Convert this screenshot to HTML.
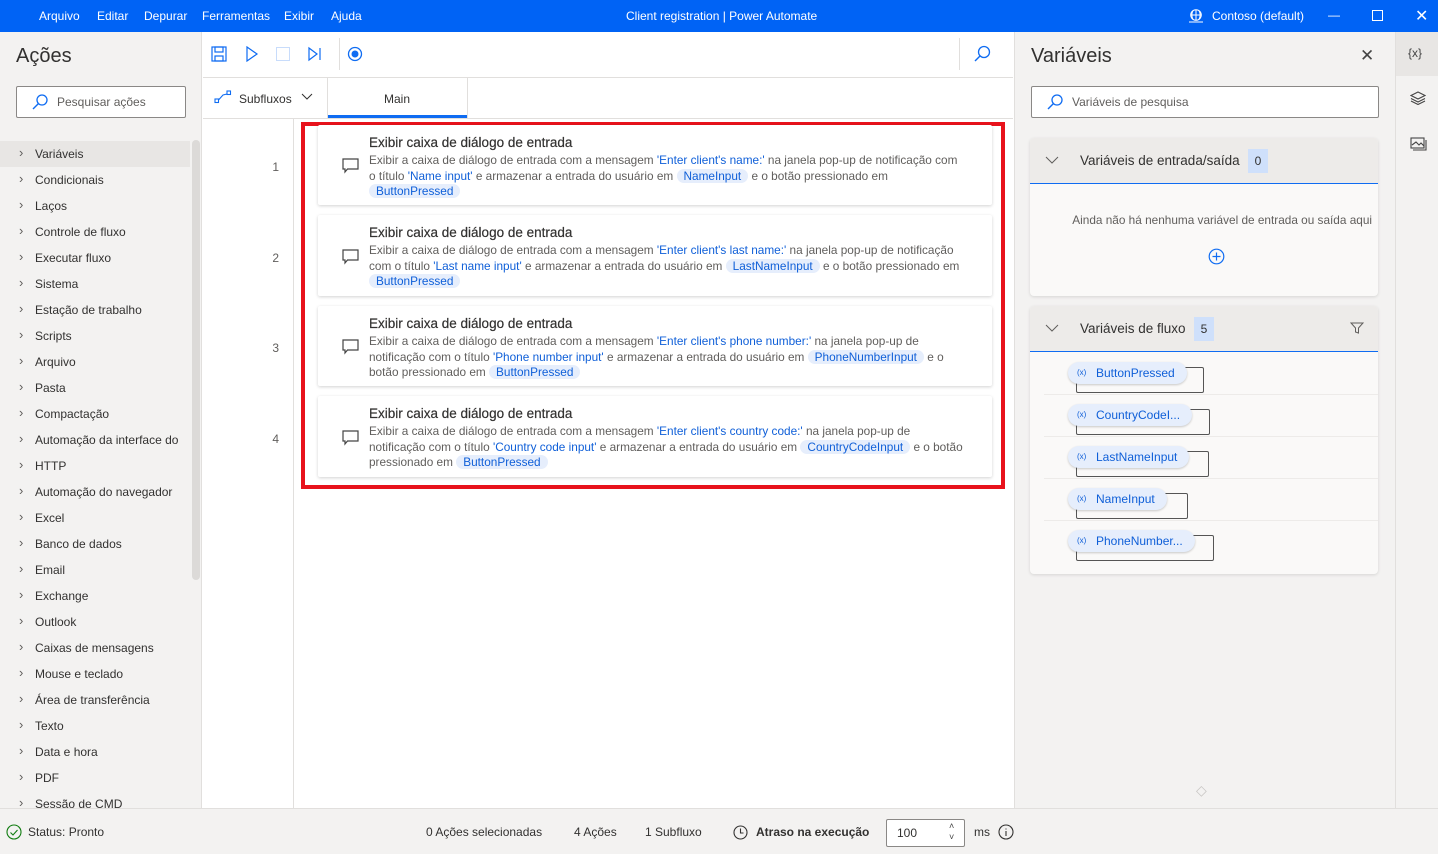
<!DOCTYPE html>
<html><head><meta charset="utf-8"><style>
*{box-sizing:border-box;margin:0;padding:0}
body{width:1438px;height:854px;overflow:hidden;font-family:"Liberation Sans",sans-serif;background:#fff;position:relative;color:#323130;font-size:12px}
.abs{position:absolute}
.tb{left:0;top:0;width:1438px;height:32px;background:#0063f5;color:#fff;font-size:12px}
.tb span{position:absolute;top:9px}
.left{left:0;top:32px;width:202px;height:776px;background:#f3f2f1;border-right:1px solid #e1dfdd}
.left .it{position:absolute;left:0;width:190px;height:26px;line-height:26px;padding-left:35px;font-size:12px;color:#323130}
.left .it:before{content:"›";position:absolute;left:19px;top:-1px;color:#605e5c;font-size:13px}
.search{border:1px solid #8a8886;background:#fff;height:32px;border-radius:2px;color:#605e5c;font-size:12px;line-height:30px;padding-left:40px}
.card{left:318px;width:674px;background:#fff;box-shadow:0 1px 3px rgba(0,0,0,.18);border-radius:2px}
.card h4{position:absolute;left:51px;top:10px;font-size:13.5px;font-weight:normal;color:#323130;-webkit-text-stroke:.2px #323130}
.card p{position:absolute;left:51px;top:28px;width:598px;font-size:11.8px;line-height:15.7px;color:#605e5c}
.b{color:#0f5fd8}
.pill{background:#e6eefc;color:#0f5fd8;border-radius:9px;padding:0 7px}
.num{left:203px;width:76px;text-align:right;color:#605e5c;font-size:12px}
.ic{left:342px}
.right{left:1014px;top:32px;width:381px;height:776px;background:#f3f2f1;border-left:1px solid #e1dfdd}
.strip{left:1395px;top:32px;width:43px;height:776px;background:#f3f2f1;border-left:1px solid #e1dfdd}
.sec{background:#faf9f8;border-radius:4px;box-shadow:0 1px 3px rgba(0,0,0,.12)}
.sech{height:46px;background:#edebe9;border-bottom:1.5px solid #0f6cf2;border-radius:4px 4px 0 0;position:relative}
.badge{display:inline-block;background:#cfe0fb;padding:0 7px;height:24px;line-height:24px;margin-left:8px;font-size:12px}
.var{position:absolute;left:1044px;width:334px;height:42px;border-bottom:1px solid #edebe9}
.var .bx{position:absolute;left:32px;top:14px;height:26px;border:1px solid #555;border-radius:2px}
.var .vp{position:absolute;left:24px;top:9px;height:22px;line-height:22px;background:#e6eefc;border-radius:11px;padding:0 12px 0 28px;color:#0f5fd8;font-size:12px;box-shadow:0 1px 2px rgba(0,0,0,.2)}
.var .vp:before{content:"(x)";position:absolute;left:9px;font-size:8px;top:0}
.status{left:0;top:808px;width:1438px;height:46px;background:#f3f2f1;border-top:1px solid #e1dfdd;font-size:12px}
.status span{position:absolute;top:16px}
</style></head><body>
<div class="abs tb">
<span style="left:39px">Arquivo</span><span style="left:97px">Editar</span><span style="left:144px">Depurar</span><span style="left:202px">Ferramentas</span><span style="left:284px">Exibir</span><span style="left:331px">Ajuda</span>
<span style="left:626px">Client registration | Power Automate</span>
<svg class="abs" style="left:1188px;top:9px" width="16" height="14" fill="none" stroke="#fff" stroke-width="1"><circle cx="8" cy="6" r="5.3"/><path d="M2.7 6h10.6M8 0.7v10.6M5 1.5c-1.5 3-1.5 6 0 9M11 1.5c1.5 3 1.5 6 0 9M1 13h14"/></svg>
<span style="left:1212px">Contoso (default)</span>
<span style="left:1328px;top:8px">—</span>
<span style="left:1372px;top:10px;width:11px;height:11px;border:1.3px solid #fff"></span>
<span style="left:1415px;top:6px;font-size:16px">✕</span>
</div>

<div class="abs left">
<div class="abs" style="left:16px;top:13px;font-size:20px;color:#323130">Ações</div>
<div class="abs search" style="left:16px;top:54px;width:170px">Pesquisar ações</div>
<svg class="abs" style="left:32px;top:62px" width="16" height="16"><circle cx="10" cy="6" r="5" fill="none" stroke="#0f6cf2" stroke-width="1.3"/><line x1="6.5" y1="9.5" x2="1" y2="15" stroke="#0f6cf2" stroke-width="1.4"/></svg>
<div class="abs" style="left:192px;top:108px;width:8px;height:440px;background:#dcdad8;border-radius:4px"></div>
<div class="it" style="top:109px;background:#e8e6e4">Variáveis</div>
<div class="it" style="top:135px">Condicionais</div>
<div class="it" style="top:161px">Laços</div>
<div class="it" style="top:187px">Controle de fluxo</div>
<div class="it" style="top:213px">Executar fluxo</div>
<div class="it" style="top:239px">Sistema</div>
<div class="it" style="top:265px">Estação de trabalho</div>
<div class="it" style="top:291px">Scripts</div>
<div class="it" style="top:317px">Arquivo</div>
<div class="it" style="top:343px">Pasta</div>
<div class="it" style="top:369px">Compactação</div>
<div class="it" style="top:395px">Automação da interface do</div>
<div class="it" style="top:421px">HTTP</div>
<div class="it" style="top:447px">Automação do navegador</div>
<div class="it" style="top:473px">Excel</div>
<div class="it" style="top:499px">Banco de dados</div>
<div class="it" style="top:525px">Email</div>
<div class="it" style="top:551px">Exchange</div>
<div class="it" style="top:577px">Outlook</div>
<div class="it" style="top:603px">Caixas de mensagens</div>
<div class="it" style="top:629px">Mouse e teclado</div>
<div class="it" style="top:655px">Área de transferência</div>
<div class="it" style="top:681px">Texto</div>
<div class="it" style="top:707px">Data e hora</div>
<div class="it" style="top:733px">PDF</div>
<div class="it" style="top:759px;height:17px;overflow:hidden">Sessão de CMD</div>
</div>

<div class="abs" style="left:203px;top:32px;width:810px;height:46px;border-bottom:1px solid #e1dfdd"></div>
<svg class="abs" style="left:211px;top:46px" width="16" height="16" fill="none" stroke="#0f6cf2" stroke-width="1.2"><rect x="1" y="1" width="14" height="14"/><rect x="4" y="1" width="8" height="5"/><rect x="4" y="10" width="8" height="5"/></svg>
<svg class="abs" style="left:245px;top:46px" width="14" height="16" fill="none" stroke="#0f6cf2" stroke-width="1.2"><path d="M2 1 L12 8 L2 15 Z"/></svg>
<div class="abs" style="left:276px;top:47px;width:14px;height:14px;border:1px solid #c8dcfb"></div>
<svg class="abs" style="left:308px;top:46px" width="14" height="16" fill="none" stroke="#0f6cf2" stroke-width="1.2"><path d="M1 2 L9 8 L1 14 Z"/><line x1="12" y1="2" x2="12" y2="14"/></svg>
<div class="abs" style="left:339px;top:38px;width:1px;height:32px;background:#e1dfdd"></div>
<svg class="abs" style="left:347px;top:46px" width="16" height="16"><circle cx="8" cy="8" r="6.5" fill="none" stroke="#0f6cf2" stroke-width="1.3"/><circle cx="8" cy="8" r="3.5" fill="#0f6cf2"/></svg>
<div class="abs" style="left:959px;top:38px;width:1px;height:32px;background:#e1dfdd"></div>
<svg class="abs" style="left:973px;top:45px" width="18" height="18"><circle cx="11" cy="7" r="5.5" fill="none" stroke="#0f6cf2" stroke-width="1.3"/><line x1="7" y1="11" x2="2" y2="16" stroke="#0f6cf2" stroke-width="1.4"/></svg>
<div class="abs" style="left:203px;top:78px;width:810px;height:41px;border-bottom:1px solid #e1dfdd"></div>
<svg class="abs" style="left:214px;top:90px" width="18" height="14" fill="none" stroke="#0f6cf2" stroke-width="1.1"><rect x="1" y="9" width="3.5" height="3.5"/><rect x="13" y="1" width="3.5" height="3.5"/><path d="M4.5 10 L9 5 L13 4"/></svg>
<div class="abs" style="left:239px;top:92px;font-size:12px">Subfluxos</div>
<svg class="abs" style="left:301px;top:93px" width="12" height="8" fill="none" stroke="#323130"><path d="M1 1 L6 6 L11 1"/></svg>
<div class="abs" style="left:327px;top:78px;width:1px;height:41px;background:#e1dfdd"></div>
<div class="abs" style="left:467px;top:78px;width:1px;height:41px;background:#e1dfdd"></div>
<div class="abs" style="left:384px;top:92px;font-size:12px">Main</div>
<div class="abs" style="left:328px;top:115px;width:139px;height:3px;background:#0f6cf2"></div>
<div class="abs" style="left:293px;top:119px;width:1px;height:689px;background:#e1dfdd"></div>

<div class="abs num" style="top:160px">1</div>
<div class="abs num" style="top:251px">2</div>
<div class="abs num" style="top:341px">3</div>
<div class="abs num" style="top:432px">4</div>

<div class="abs" style="left:301px;top:122px;width:704px;height:367px;border:4px solid #e8121c"></div>

<div class="abs card" style="top:125px;height:80px"><h4>Exibir caixa de diálogo de entrada</h4><p>Exibir a caixa de diálogo de entrada com a mensagem <span class="b">'Enter client's name:'</span> na janela pop-up de notificação com o título <span class="b">'Name input'</span> e armazenar a entrada do usuário em <span class="pill">NameInput</span> e o botão pressionado em <span class="pill">ButtonPressed</span></p></div>
<div class="abs card" style="top:215px;height:81px"><h4>Exibir caixa de diálogo de entrada</h4><p>Exibir a caixa de diálogo de entrada com a mensagem <span class="b">'Enter client's last name:'</span> na janela pop-up de notificação com o título <span class="b">'Last name input'</span> e armazenar a entrada do usuário em <span class="pill">LastNameInput</span> e o botão pressionado em <span class="pill">ButtonPressed</span></p></div>
<div class="abs card" style="top:306px;height:80px"><h4>Exibir caixa de diálogo de entrada</h4><p>Exibir a caixa de diálogo de entrada com a mensagem <span class="b">'Enter client's phone number:'</span> na janela pop-up de notificação com o título <span class="b">'Phone number input'</span> e armazenar a entrada do usuário em <span class="pill">PhoneNumberInput</span> e o botão pressionado em <span class="pill">ButtonPressed</span></p></div>
<div class="abs card" style="top:396px;height:81px"><h4>Exibir caixa de diálogo de entrada</h4><p>Exibir a caixa de diálogo de entrada com a mensagem <span class="b">'Enter client's country code:'</span> na janela pop-up de notificação com o título <span class="b">'Country code input'</span> e armazenar a entrada do usuário em <span class="pill">CountryCodeInput</span> e o botão pressionado em <span class="pill">ButtonPressed</span></p></div>
<svg class="abs ic" style="top:158px" width="17" height="16" fill="none" stroke="#444" stroke-width="1.2"><path d="M1 1h15v10H5.5L3 14v-3H1z"/></svg>
<svg class="abs ic" style="top:249px" width="17" height="16" fill="none" stroke="#444" stroke-width="1.2"><path d="M1 1h15v10H5.5L3 14v-3H1z"/></svg>
<svg class="abs ic" style="top:339px" width="17" height="16" fill="none" stroke="#444" stroke-width="1.2"><path d="M1 1h15v10H5.5L3 14v-3H1z"/></svg>
<svg class="abs ic" style="top:430px" width="17" height="16" fill="none" stroke="#444" stroke-width="1.2"><path d="M1 1h15v10H5.5L3 14v-3H1z"/></svg>

<div class="abs right">
<div class="abs" style="left:16px;top:13px;font-size:20px">Variáveis</div>
<div class="abs" style="left:345px;top:14px;font-size:17px;color:#444">✕</div>
<div class="abs search" style="left:16px;top:54px;width:348px">Variáveis de pesquisa</div>
<svg class="abs" style="left:32px;top:62px" width="16" height="16"><circle cx="10" cy="6" r="5" fill="none" stroke="#0f6cf2" stroke-width="1.3"/><line x1="6.5" y1="9.5" x2="1" y2="15" stroke="#0f6cf2" stroke-width="1.4"/></svg>
<div class="abs sec" style="left:15px;top:106px;width:348px;height:158px">
<div class="sech"><svg class="abs" style="left:15px;top:18px" width="14" height="8" fill="none" stroke="#605e5c"><path d="M1 1 L7 7 L13 1"/></svg><div class="abs" style="left:50px;top:11px;font-size:13.5px;line-height:24px">Variáveis de entrada/saída<span class="badge">0</span></div></div>
<div class="abs" style="left:0;width:348px;top:75px;text-align:right;padding-right:6px;font-size:11.8px;color:#605e5c">Ainda não há nenhuma variável de entrada ou saída aqui</div>
<svg class="abs" style="left:178px;top:110px" width="17" height="17" fill="none" stroke="#0f6cf2" stroke-width="1.2"><circle cx="8.5" cy="8.5" r="7.3"/><path d="M8.5 4.5v8M4.5 8.5h8"/></svg>
</div>
<div class="abs sec" style="left:15px;top:274px;width:348px;height:268px">
<div class="sech"><svg class="abs" style="left:15px;top:18px" width="14" height="8" fill="none" stroke="#605e5c"><path d="M1 1 L7 7 L13 1"/></svg><div class="abs" style="left:50px;top:11px;font-size:13.5px;line-height:24px">Variáveis de fluxo<span class="badge">5</span></div>
<svg class="abs" style="left:320px;top:16px" width="14" height="12" fill="none" stroke="#605e5c"><path d="M1 1h12L8.5 6v5L5.5 10V6z"/></svg></div>
</div>
</div>
<div class="var" style="top:353px"><div class="bx" style="width:128px"></div><div class="vp">ButtonPressed</div></div>
<div class="var" style="top:395px"><div class="bx" style="width:134px"></div><div class="vp">CountryCodeI...</div></div>
<div class="var" style="top:437px"><div class="bx" style="width:133px"></div><div class="vp">LastNameInput</div></div>
<div class="var" style="top:479px"><div class="bx" style="width:112px"></div><div class="vp">NameInput</div></div>
<div class="var" style="top:521px;border:0"><div class="bx" style="width:138px"></div><div class="vp">PhoneNumber...</div></div>
<div class="abs" style="left:1196px;top:782px;color:#c8c6c4;font-size:14px">◇</div>

<div class="abs strip">
<div class="abs" style="left:0;top:0;width:43px;height:44px;background:#e8e6e4"></div>
<div class="abs" style="left:12px;top:14px;font-size:12px;color:#444">{x}</div>
<svg class="abs" style="left:14px;top:59px" width="16" height="14" fill="none" stroke="#444" stroke-width="1.1"><path d="M8 1L15 4.5L8 8L1 4.5Z"/><path d="M1 7.5L8 11L15 7.5M1 10L8 13.5L15 10"/></svg>
<svg class="abs" style="left:14px;top:105px" width="17" height="14" fill="none" stroke="#444" stroke-width="1.1"><rect x="1" y="1" width="13" height="10"/><path d="M3 13h13V3M2 8l4-3 3 3 2-2 3 3"/></svg>
</div>

<div class="abs status">
<svg class="abs" style="left:6px;top:15px" width="16" height="16" fill="none" stroke="#107c10" stroke-width="1.1"><circle cx="8" cy="8" r="7"/><path d="M4.5 8.5l2.5 2.5 4.5-5"/></svg>
<span style="left:28px">Status: Pronto</span>
<span style="left:426px">0 Ações selecionadas</span>
<span style="left:574px">4 Ações</span>
<span style="left:645px">1 Subfluxo</span>
<svg class="abs" style="left:733px;top:16px" width="15" height="15" fill="none" stroke="#323130" stroke-width="1.1"><circle cx="7.5" cy="7.5" r="6.5"/><path d="M7.5 3.5v4.5h3"/></svg>
<span style="left:756px;font-weight:bold">Atraso na execução</span>
<div class="abs" style="left:886px;top:10px;width:79px;height:28px;background:#fff;border:1px solid #8a8886;border-radius:2px;padding:6px 10px">100<span style="position:absolute;left:62px;top:1px;font-size:9px;line-height:11px;color:#444">˄<br>˅</span></div>
<span style="left:974px">ms</span>
<svg class="abs" style="left:998px;top:15px" width="16" height="16" fill="none" stroke="#323130" stroke-width="1.1"><circle cx="8" cy="8" r="7"/><path d="M8 7v5M8 4.5v1"/></svg>
</div>
</body></html>
